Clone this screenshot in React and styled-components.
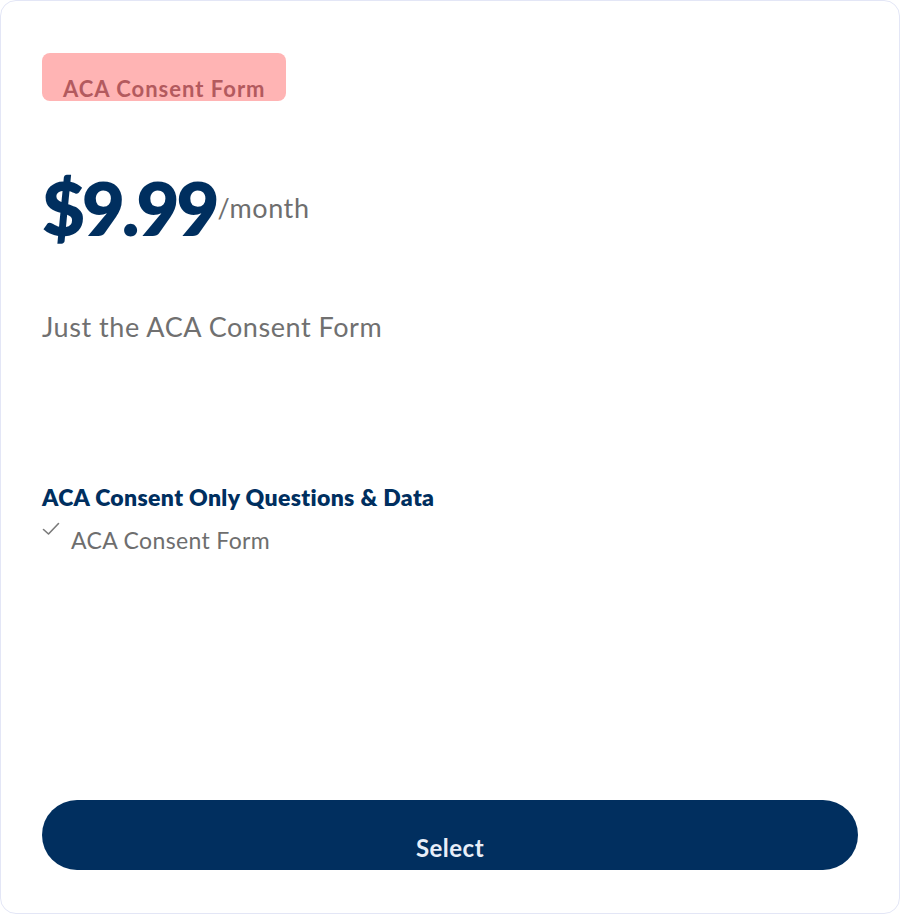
import styled, { createGlobalStyle } from 'styled-components';

const GlobalStyle = createGlobalStyle`
    html, body {
        margin: 0;
        padding: 0;
        background: #ffffff;
    }
    body {
        font-family: "Lato", "Noto Sans", sans-serif;
    }
`;

const CheckIcon = () => (
    <svg width="18" height="14" viewBox="0 0 18 14" fill="none">
        <path d="M1.5 7.5 L6.5 12 L16.5 1.5" stroke="#7a7a7a" strokeWidth="1.6" strokeLinecap="round" strokeLinejoin="round" />
    </svg>
);

const App = () => {
    return <>
        <GlobalStyle />
        <Card>
            <Badge>ACA Consent Form</Badge>
            <PriceRow>
                <Amount>$9.99</Amount>
                <Period>/month</Period>
            </PriceRow>
            <Description>Just the ACA Consent Form</Description>
            <FeatureGroup>
                <FeatureTitle>ACA Consent Only Questions &amp; Data</FeatureTitle>
                <FeatureItem>
                    <CheckIcon />
                    <span>ACA Consent Form</span>
                </FeatureItem>
            </FeatureGroup>
            <SelectButton>Select</SelectButton>
        </Card>
    </>;
};

const Card = styled.div`
    box-sizing: border-box;
    width: 900px;
    height: 914px;
    border: 1px solid #e3e6f6;
    border-radius: 16px;
    background: #fff;
    padding: 52px 42px 43px 41px;
    display: flex;
    flex-direction: column;
    align-items: flex-start;
`;

const Badge = styled.div`
    box-sizing: border-box;
    height: 48px;
    padding: 25px 20px 0 21px;
    border-radius: 8px;
    background: #ffb4b4;
    color: #b35a5e;
    font-size: 22px;
    line-height: 22px;
    font-weight: 700;
    letter-spacing: 1px;
`;

const PriceRow = styled.div`
    display: flex;
    align-items: center;
    margin-top: 70px;
    color: #002f5f;
`;

const Amount = styled.span`
    font-size: 74px;
    line-height: 74px;
    font-weight: 800;
    letter-spacing: -3px;
`;

const Period = styled.span`
    font-size: 27px;
    color: #6e6e6e;
    font-weight: 400;
    letter-spacing: 0.6px;
    margin-left: 1px;
    margin-top: -1px;
`;

const Description = styled.p`
    margin: 66px 0 0;
    font-size: 27px;
    line-height: 32px;
    color: #707070;
    letter-spacing: 0.55px;
`;

const FeatureGroup = styled.div`
    margin-top: 140px;
    display: flex;
    flex-direction: column;
`;

const FeatureTitle = styled.h3`
    margin: 0;
    font-size: 23px;
    line-height: 28px;
    font-weight: 800;
    letter-spacing: 0.35px;
    color: #002f5f;
`;

const FeatureItem = styled.div`
    display: flex;
    align-items: flex-start;
    gap: 11px;
    margin-top: 8px;
    font-size: 23px;
    line-height: 26px;
    letter-spacing: 0.35px;
    color: #6e6e6e;

    svg {
        margin-top: 3px;
        flex: none;
    }

    span {
        margin-top: 8px;
    }
`;

const SelectButton = styled.button`
    margin-top: auto;
    align-self: stretch;
    height: 70px;
    margin-right: -1px;
    border: none;
    border-radius: 35px;
    background: #012f5f;
    color: #e8eef8;
    font-family: inherit;
    font-size: 24px;
    font-weight: 700;
    letter-spacing: 0.5px;
    padding-top: 26px;
    cursor: pointer;
`;

export default App;
